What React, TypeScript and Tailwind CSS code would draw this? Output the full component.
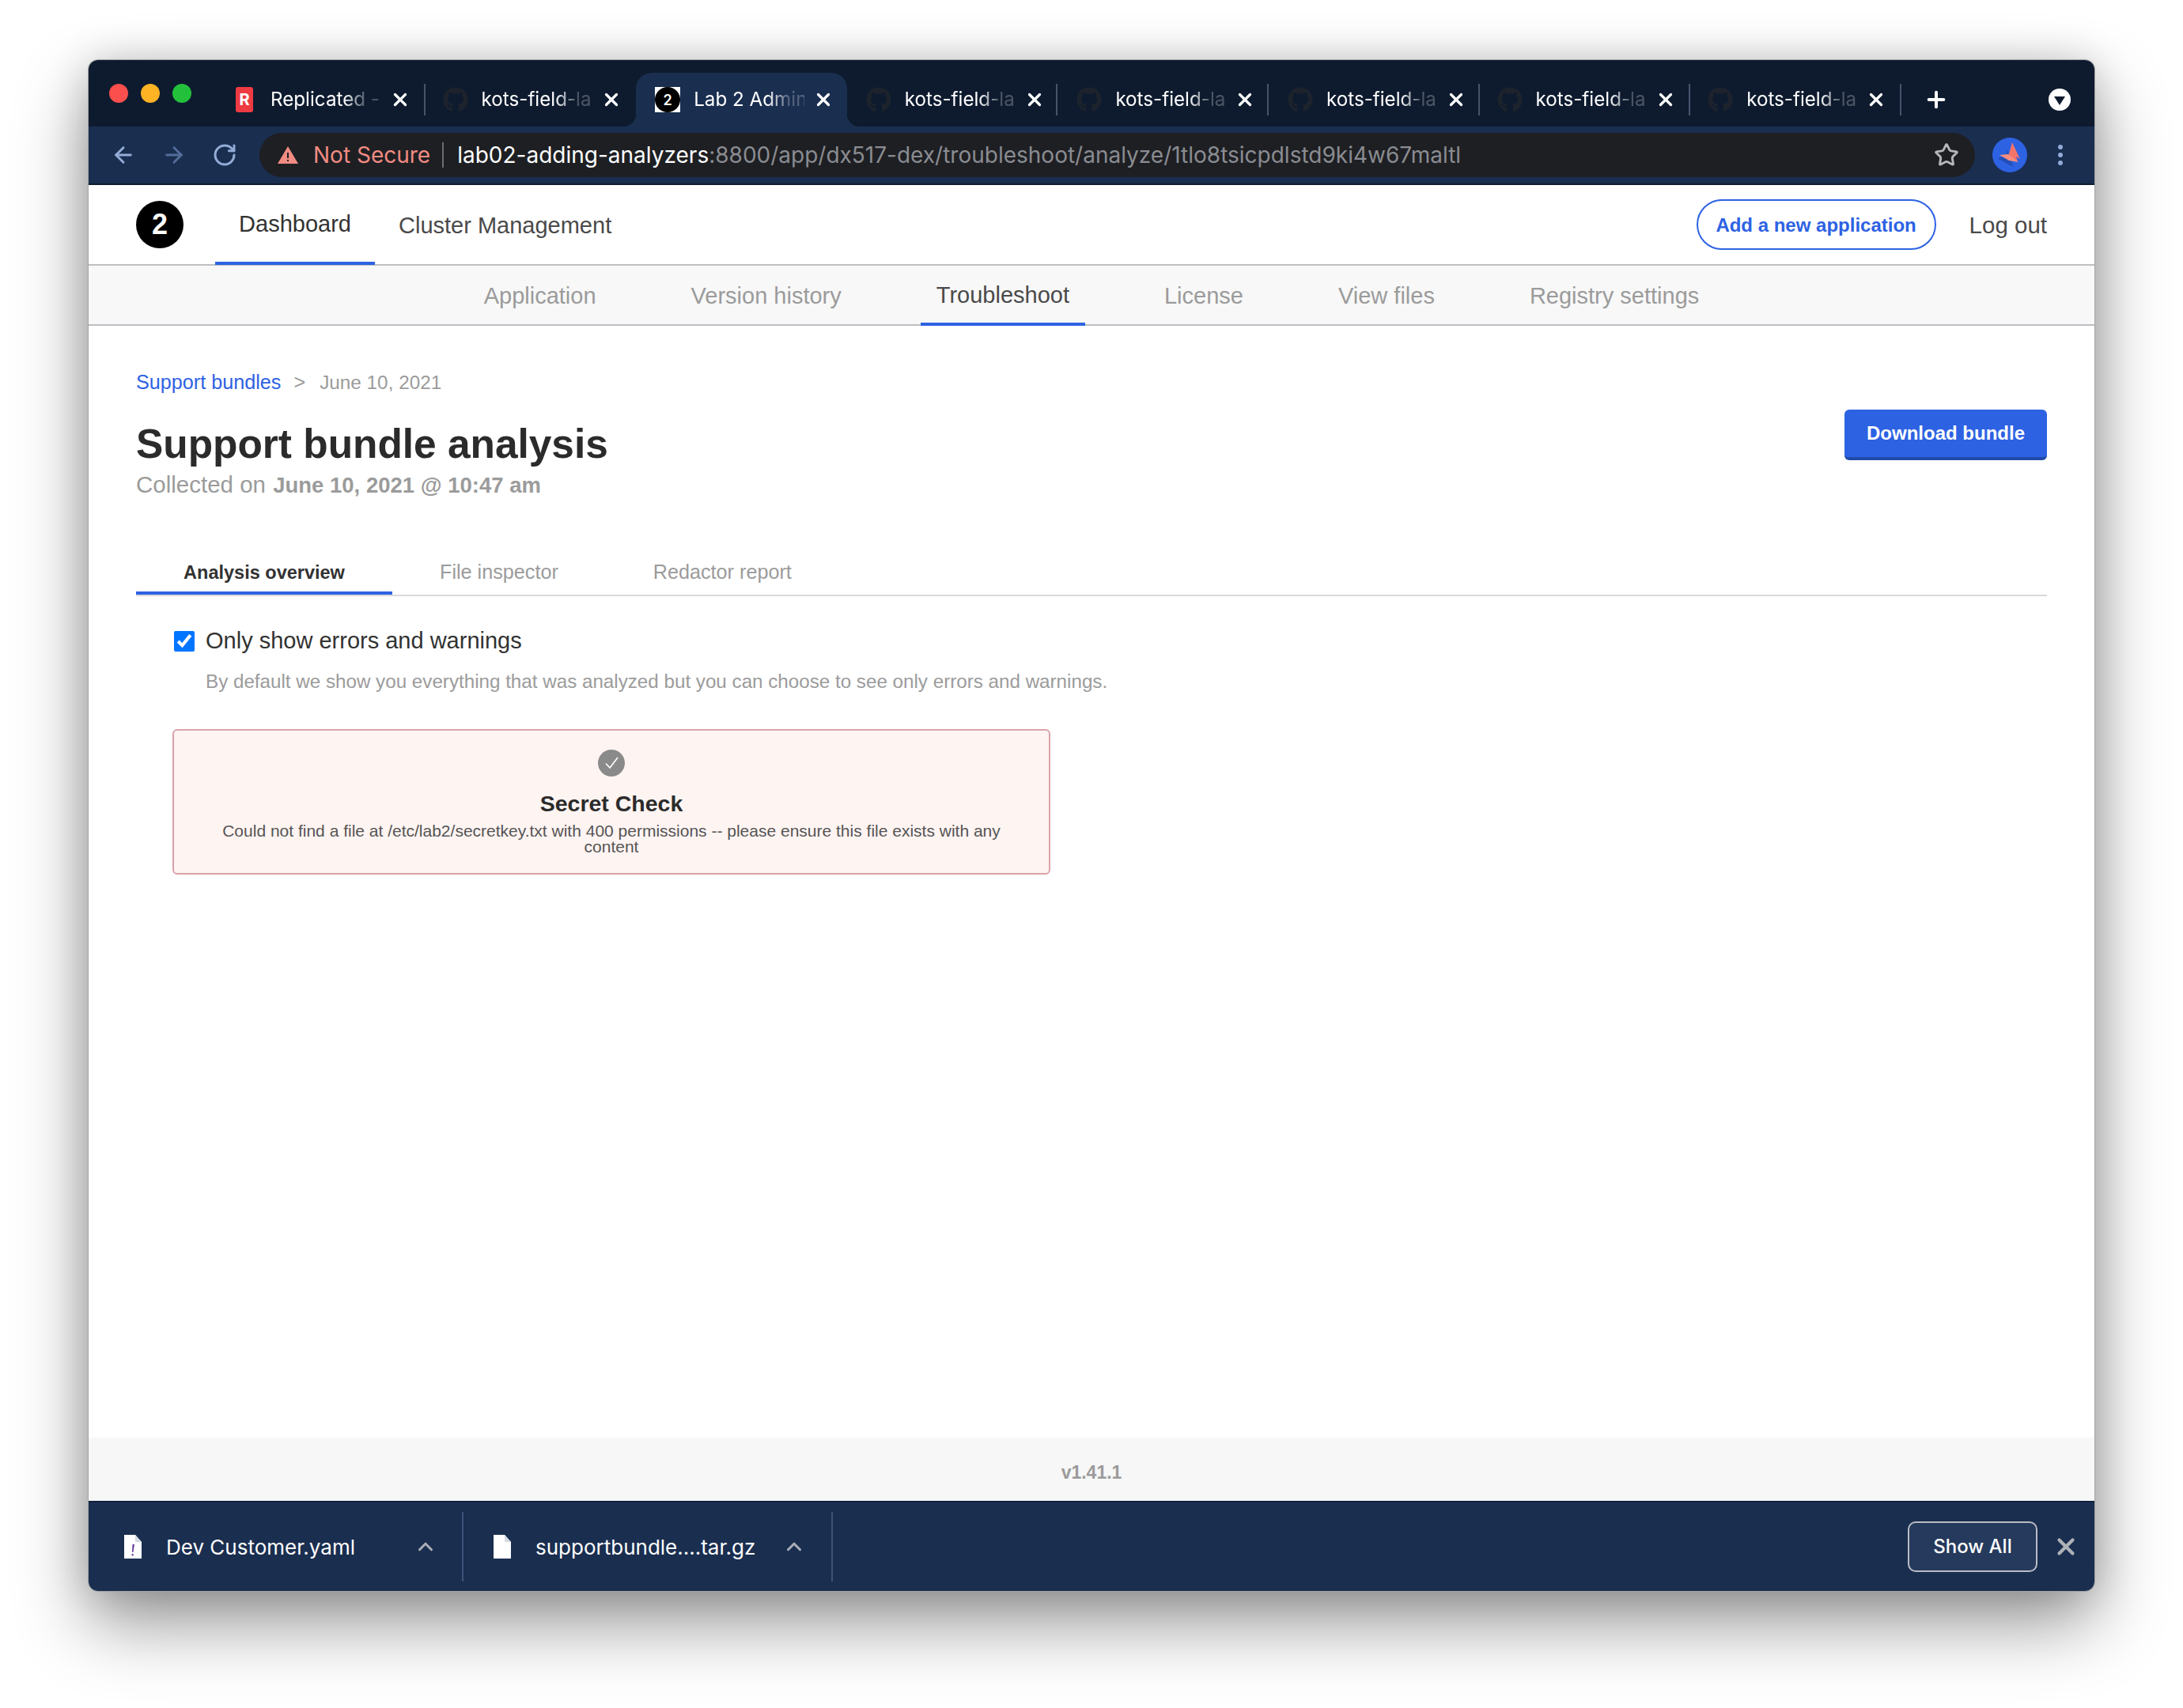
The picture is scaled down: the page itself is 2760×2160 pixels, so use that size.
import { ArrowLeft, ArrowRight, ChevronUp, Plus, RotateCw, Star, X } from 'lucide-react'
import { FaGithub } from 'react-icons/fa'

const chromeTabs = [
  { title: 'Replicated -', icon: 'replicated', sep: true },
  { title: 'kots-field-la', icon: 'github' },
  { title: 'Lab 2 Admin', icon: 'lab', active: true, nudge: true },
  { title: 'kots-field-la', icon: 'github', sep: true, nudge: true },
  { title: 'kots-field-la', icon: 'github', sep: true, nudge: true },
  { title: 'kots-field-la', icon: 'github', sep: true, nudge: true },
  { title: 'kots-field-la', icon: 'github', sep: true },
  { title: 'kots-field-la', icon: 'github', sep: true },
]

const subNav = [
  { label: 'Application' },
  { label: 'Version history' },
  { label: 'Troubleshoot', active: true },
  { label: 'License' },
  { label: 'View files' },
  { label: 'Registry settings' },
]

const uiFont = "font-['Inter',sans-serif]"
const pageFont = "font-['Liberation_Sans',Arial,sans-serif]"

function Favicon({ icon }: { icon: string }) {
  if (icon === 'github') return <FaGithub className="w-[32px] h-[32px] text-[#1d232c] shrink-0" />
  if (icon === 'lab') {
    return (
      <div className="w-[32px] h-[32px] bg-white shrink-0 flex items-center justify-center">
        <div className="w-[32px] h-[32px] rounded-full bg-black text-white text-[18px] font-semibold flex items-center justify-center">2</div>
      </div>
    )
  }
  return (
    <div className="w-[32px] h-[32px] shrink-0 flex items-center justify-center">
      <div className="w-[22px] h-[32px] rounded-[3px] bg-[#ee3a43] text-white text-[20px] font-bold flex items-center justify-center">R</div>
    </div>
  )
}

function ChromeTab({ title, icon, active, sep, nudge }: { title: string; icon: string; active?: boolean; sep?: boolean; nudge?: boolean }) {
  return (
    <div className={`relative w-[266.6px] h-[68px] flex items-center shrink-0 ${nudge ? 'pl-[24px]' : 'pl-[22px]'} ${active ? 'bg-[#1a2e50] rounded-t-[20px]' : ''}`}>
      {active && <span className="absolute left-[-16px] bottom-0 w-[16px] h-[16px] bg-[radial-gradient(circle_at_0_0,#0e1b2f_16px,#1a2e50_16.5px)]" />}
      {active && <span className="absolute right-[-16px] bottom-0 w-[16px] h-[16px] bg-[radial-gradient(circle_at_100%_0,#0e1b2f_16px,#1a2e50_16.5px)]" />}
      <Favicon icon={icon} />
      <div className="ml-[17px] w-[140px] whitespace-nowrap text-[24.2px] text-white [mask-image:linear-gradient(to_right,#000_66%,rgba(0,0,0,0.25)_86%,rgba(0,0,0,0.25)_100%)]">{title}</div>
      <X className="ml-[11px] w-[26px] h-[26px] text-white shrink-0" strokeWidth={3} />
      {sep && <span className="absolute right-0 top-[14px] w-[2px] h-[40px] bg-[#46546b]" />}
    </div>
  )
}

function Butterfly() {
  return (
    <div className="ml-[22px] w-[44px] h-[44px] rounded-full bg-[#2d62e3] flex items-center justify-center shrink-0">
      <svg viewBox="0 0 44 44" className="w-[44px] h-[44px]">
        <path d="M18 14 L24 30 L27 37 L20 34 L6 26 L18 24 Z" fill="#234fb8" />
        <path d="M25 6 L35 27 L30 24 L32 31 L20 24 Z" fill="#f4736a" />
        <path d="M9 22 L20 21 L33 31 L21 29 Z" fill="#f78d80" />
      </svg>
    </div>
  )
}

function FileIcon({ alert }: { alert?: boolean }) {
  return (
    <svg viewBox="0 0 24 32" className="w-[24px] h-[32px] shrink-0">
      <path d="M1 1 H15 L23 10 V31 H1 Z" fill="#fff" />
      <path d="M15 1 L23 10 H15 Z" fill="#d5d9e0" />
      {alert && <path d="M11.5 13 H14 L12.5 23 H11 Z M10.6 25 H12.6 V27.4 H10.6 Z" fill="#6a3ea1" />}
    </svg>
  )
}

function DownloadItem({ name, alert, width, chevronGap }: { name: string; alert?: boolean; width: string; chevronGap: string }) {
  return (
    <div className={`flex items-center h-[88px] border-r-2 border-[#3d5277] shrink-0 ${width}`}>
      <FileIcon alert={alert} />
      <span className="ml-[30px] text-[26px] text-white">{name}</span>
      <ChevronUp className={`ml-auto w-[30px] h-[30px] text-[#a9adb5] ${chevronGap}`} strokeWidth={2.5} />
    </div>
  )
}

export default function App() {
  return (
    <div className="w-[2760px] h-[2160px] bg-white pt-[76px] pl-[112px] overflow-hidden">
      <div className="w-[2536px] h-[1936px] flex flex-col rounded-[12px] overflow-hidden bg-white shadow-[0_0_0_1px_#a5a5a5,0_40px_90px_rgba(0,0,0,0.42),0_0_50px_rgba(0,0,0,0.16)]">
        {/* Tab strip */}
        <div className={`h-[84px] bg-[#0e1b2f] flex items-end shrink-0 ${uiFont}`}>
          <div className="w-[159px] h-[84px] pl-[26px] flex items-center gap-[16px] shrink-0">
            <span className="w-[24px] h-[24px] rounded-full bg-[#fb4f4d]" />
            <span className="w-[24px] h-[24px] rounded-full bg-[#fdb324]" />
            <span className="w-[24px] h-[24px] rounded-full bg-[#23c13b]" />
          </div>
          {chromeTabs.map((t, i) => <ChromeTab key={i} {...t} />)}
          <div className="h-[68px] flex items-center ml-[28px]">
            <Plus className="w-[32px] h-[32px] text-white" strokeWidth={3} />
          </div>
          <div className="h-[68px] flex items-center ml-auto mr-[30px]">
            <div className="w-[28px] h-[28px] rounded-full bg-white flex items-center justify-center">
              <span className="w-0 h-0 border-x-[7px] border-x-transparent border-t-[11px] border-t-[#0e1b2f] mt-[2px]" />
            </div>
          </div>
        </div>

        {/* Toolbar */}
        <div className={`h-[74px] bg-[#1a2e50] border-b-2 border-[#121c2e] flex items-center pl-[28px] shrink-0 ${uiFont}`}>
          <ArrowLeft className="w-[32px] h-[32px] text-[#92acd6]" strokeWidth={2.2} />
          <ArrowRight className="ml-[32px] w-[32px] h-[32px] text-[#526d98]" strokeWidth={2.2} />
          <RotateCw className="ml-[32px] w-[32px] h-[32px] text-[#92acd6]" strokeWidth={2.2} />
          <div className="ml-[28px] w-[2169px] h-[56px] rounded-full bg-[#1e1f23] flex items-center pl-[23px] pr-[20px] shrink-0">
            <svg viewBox="0 0 26 22" className="w-[26px] h-[22px] shrink-0">
              <path d="M13 0 L26 22 H0 Z" fill="#f28b82" />
              <path d="M12 8 H14 V15 H12 Z M12 17 H14 V19 H12 Z" fill="#1e1f23" />
            </svg>
            <span className="ml-[19px] text-[28px] text-[#f28b82]">Not Secure</span>
            <span className="ml-[15px] w-[2px] h-[32px] bg-[#6b6d72]" />
            <span className="ml-[17px] text-[28px] text-white whitespace-nowrap">
              lab02-adding-analyzers<span className="text-[#8a8c91]">:8800/app/dx517-dex/troubleshoot/analyze/1tlo8tsicpdlstd9ki4w67maltl</span>
            </span>
            <Star className="ml-auto w-[32px] h-[32px] text-[#b4b6ba]" strokeWidth={2.2} />
          </div>
          <Butterfly />
          <div className="ml-[39px] flex flex-col gap-[4px]">
            <span className="w-[6px] h-[6px] rounded-full bg-[#92acd6]" />
            <span className="w-[6px] h-[6px] rounded-full bg-[#92acd6]" />
            <span className="w-[6px] h-[6px] rounded-full bg-[#92acd6]" />
          </div>
        </div>

        {/* Page */}
        <div className={`flex-1 flex flex-col min-h-0 ${pageFont}`}>
          <div className="h-[102px] border-b-2 border-[#bcbfc2] flex items-stretch pl-[60px] pr-[60px] shrink-0">
            <div className="self-center w-[60px] h-[60px] rounded-full bg-black text-white text-[36px] font-bold flex items-center justify-center">2</div>
            <div className="ml-[40px] w-[202px] flex items-center justify-center pt-[3px] text-[29px] text-[#323232] border-b-4 border-[#2d62e3] mb-[-1px]">Dashboard</div>
            <div className="ml-[30px] flex items-center pt-[3px] text-[29px] text-[#4a4a4a]">Cluster Management</div>
            <div className="ml-auto self-center w-[303px] h-[64px] pt-[2px] rounded-full border-2 border-[#2d62e3] flex items-center justify-center text-[24px] font-bold text-[#2d62e3]">Add a new application</div>
            <div className="ml-[42px] flex items-center pt-[3px] text-[29.5px] text-[#4a4a4a]">Log out</div>
          </div>

          <div className="h-[76px] bg-[#f8f8f8] border-b-2 border-[#bcbfc2] flex justify-center gap-[120px] shrink-0">
            {subNav.map(n => (
              <div
                key={n.label}
                className={`flex items-center justify-center pt-[3px] text-[29px] shrink-0 ${n.active ? 'text-[#4a4a4a] border-b-4 border-[#2d62e3] mb-[-2px] px-[20px] mx-[-20px]' : 'text-[#9b9b9b]'}`}
              >
                {n.label}
              </div>
            ))}
          </div>

          <div className="flex-1 px-[60px] pt-[56px] min-h-0">
            <div className="flex items-center text-[25.2px] h-[32px]">
              <span className="text-[#2d62e3]">Support bundles</span>
              <span className="ml-[16px] text-[#9b9b9b]">&gt;</span>
              <span className="ml-[18px] text-[24.3px] text-[#9b9b9b]">June 10, 2021</span>
            </div>
            <div className="flex justify-between mt-[18px]">
              <div>
                <h1 className="text-[51.4px] leading-[64px] font-bold text-[#2b2b2b] mt-[11px]">Support bundle analysis</h1>
                <p className="text-[29.5px] leading-[34px] mt-[3px] text-[#9b9b9b]">Collected on <span className="font-bold text-[27.5px] ml-[1px]">June 10, 2021 @ 10:47 am</span></p>
              </div>
              <div className="w-[256px] h-[64px] rounded-[6px] bg-[#2d62e3] border-b-4 border-[#214ba8] flex items-center justify-center text-[24px] font-bold text-white">Download bundle</div>
            </div>

            <div className="mt-[69px] h-[54px] flex border-b-2 border-[#d9d9d9]">
              <div className="w-[324px] flex items-center justify-center pt-[2px] text-[23.5px] font-bold text-[#323232] border-b-4 border-[#2d62e3]">Analysis overview</div>
              <div className="ml-[60px] flex items-center pb-[4px] text-[25.2px] text-[#9b9b9b]">File inspector</div>
              <div className="ml-[120px] flex items-center pb-[4px] text-[25.2px] text-[#9b9b9b]">Redactor report</div>
            </div>

            <div className="ml-[48px] mt-[42px] flex items-center h-[30px]">
              <input type="checkbox" checked readOnly className="w-[26px] h-[26px] m-0 accent-[#0075ff]" />
              <span className="ml-[14px] text-[29px] text-[#323232]">Only show errors and warnings</span>
            </div>
            <p className="ml-[88px] mt-[21px] text-[24.2px] leading-[30px] text-[#9b9b9b]">By default we show you everything that was analyzed but you can choose to see only errors and warnings.</p>

            <div className="ml-[46px] mt-[45px] w-[1110px] h-[184px] rounded-[6px] border-2 border-[#d9a3a9] bg-[#fef4f2] flex flex-col items-center pt-[24px]">
              <svg viewBox="0 0 34 34" className="w-[34px] h-[34px]">
                <circle cx="17" cy="17" r="17" fill="#8a8a8a" />
                <path d="M10 17.5 L15 23 L25 10" fill="none" stroke="#fff" strokeWidth="1.6" />
              </svg>
              <div className="mt-[17px] text-[28.5px] leading-[34px] font-bold text-[#2b2b2b]">Secret Check</div>
              <p className="mt-[8px] w-[1000px] text-center text-[21px] leading-[20px] text-[#555]">Could not find a file at /etc/lab2/secretkey.txt with 400 permissions -- please ensure this file exists with any content</p>
            </div>
          </div>

          <div className="h-[80px] pt-[9px] bg-[#f7f7f7] flex items-center justify-center text-[23px] font-bold text-[#9b9b9b] shrink-0">v1.41.1</div>
        </div>

        {/* Downloads shelf */}
        <div className={`h-[114px] bg-[#1a2e50] border-t-2 border-[#122040] flex items-center pl-[44px] pr-[19px] shrink-0 ${uiFont}`}>
          <DownloadItem name="Dev Customer.yaml" alert width="w-[430px]" chevronGap="mr-[31px]" />
          <div className="w-[37px] shrink-0" />
          <DownloadItem name="supportbundle....tar.gz" width="w-[430px]" chevronGap="mr-[32px]" />
          <div className="ml-auto w-[164px] h-[64px] rounded-[10px] border-2 border-[#b9bdc4] bg-[#263a5d] flex items-center justify-center text-[24px] font-medium text-white">Show All</div>
          <X className="ml-[19px] w-[34px] h-[34px] text-[#aeb1b6]" strokeWidth={3} />
        </div>
      </div>
    </div>
  )
}
